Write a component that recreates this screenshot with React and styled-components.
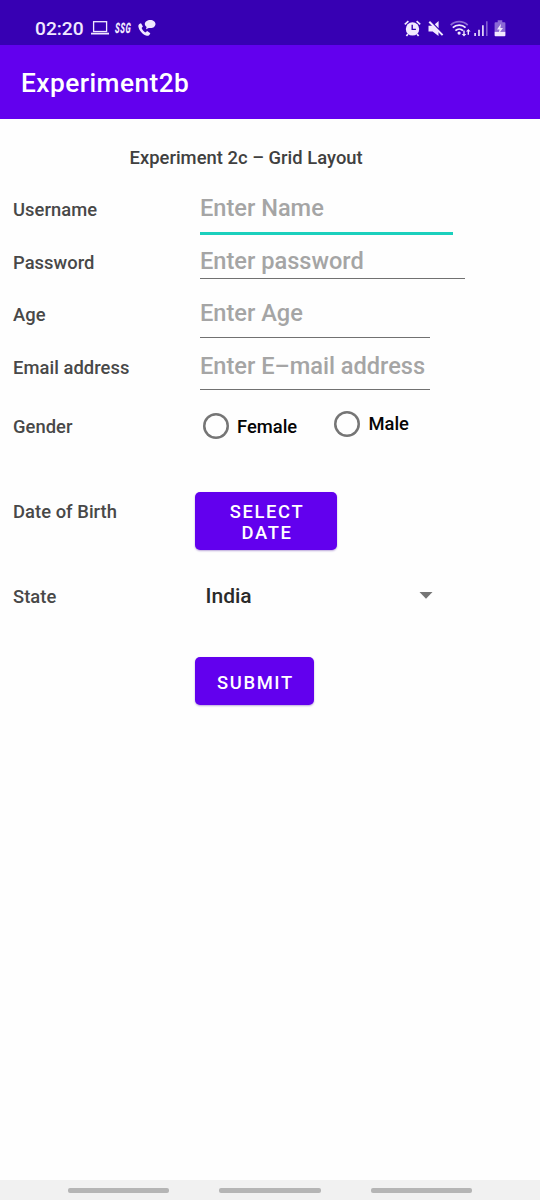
import React from 'react';
import styled, { createGlobalStyle } from 'styled-components';

const GlobalStyle = createGlobalStyle`
  * { box-sizing: border-box; }
  body {
    margin: 0;
    background: #fefefe;
    font-family: Roboto, "Liberation Sans", sans-serif;
    font-weight: 500;
  }
`;

const Screen = styled.div`
  width: 540px;
  height: 1200px;
  display: flex;
  flex-direction: column;
  overflow: hidden;
`;

const StatusBar = styled.header`
  height: 45px;
  flex: none;
  display: flex;
  justify-content: space-between;
  padding: 10px 34px 0 35px;
  background: #3700b3;
  color: #f1e9ff;
`;

const StatusGroup = styled.div`
  display: flex;
  align-items: center;
  height: 36px;
`;

const Clock = styled.span`
  width: 56px;
  padding-top: 1px;
  font-size: 19.2px;
  line-height: 36px;
  white-space: nowrap;
`;

const Carrier = styled.span`
  width: 17px;
  margin: 0 6px 0 6px;
  padding-top: 1px;
  font-size: 14.5px;
  font-weight: 900;
  font-style: italic;
  letter-spacing: 1px;
  line-height: 36px;
  white-space: nowrap;
  transform: scaleX(0.54) skewX(-6deg);
  transform-origin: left center;
`;

const Icon = styled.svg`
  display: block;
  flex: none;
  margin-left: ${(p) => p.$gap || 0}px;
`;

const AppBar = styled.div`
  height: 74px;
  flex: none;
  padding-left: 21px;
  background: #6200ee;
  color: #fff;
  font-size: 26.25px;
  letter-spacing: 0.46px;
  line-height: 77px;
`;

const Form = styled.main`
  flex: 1;
  display: flex;
  flex-direction: column;
`;

const Heading = styled.h1`
  height: 64px;
  margin: 0;
  padding-left: 129.5px;
  font-size: 18.375px;
  font-weight: 500;
  letter-spacing: 0.03px;
  line-height: 77px;
  color: #404040;
`;

const Row = styled.div`
  height: ${(p) => p.$height}px;
  display: flex;
  align-items: flex-start;
`;

const Label = styled.label`
  width: ${(p) => p.$width || 200}px;
  flex: none;
  padding-left: 13px;
  font-size: 18.375px;
  letter-spacing: 0.05px;
  line-height: ${(p) => p.$line || 53}px;
  color: #484848;
`;

const Field = styled.input`
  width: ${(p) => p.$width}px;
  height: ${(p) => p.$height}px;
  padding: ${(p) => p.$offset || 0}px 0 0;
  border: 0;
  border-bottom: ${(p) => (p.$active ? '3px solid #1bd0bd' : '1px solid #717171')};
  border-radius: 0;
  outline: none;
  background: transparent;
  font: 500 23.6px Roboto, "Liberation Sans", sans-serif;
  color: #202020;
  &::placeholder { color: #a5a5a5; opacity: 1; }
`;

const Radio = styled.label`
  display: flex;
  align-items: center;
  height: 30px;
  margin-top: ${(p) => p.$top}px;
  margin-left: ${(p) => p.$left}px;
  font-size: 18.375px;
  color: #050505;
`;

const RadioRing = styled.span`
  width: 26px;
  height: 26px;
  margin-right: 8px;
  border-radius: 50%;
  box-shadow: inset 0 0 0 2.5px #757575;
`;

const Button = styled.button`
  width: ${(p) => p.$width}px;
  height: ${(p) => p.$height}px;
  margin-top: ${(p) => p.$top}px;
  padding: 2px 20px 0 22px;
  border: 0;
  border-radius: 5px;
  background: #6200ee;
  box-shadow: 0 1px 2px rgba(60, 0, 150, 0.35);
  color: #fff;
  font: 500 18.375px/21.5px Roboto, "Liberation Sans", sans-serif;
  letter-spacing: 1.64px;
  text-transform: uppercase;
`;

const Spinner = styled.div`
  width: 227.5px;
  height: 40px;
  display: flex;
  align-items: center;
  justify-content: space-between;
  margin-top: 13px;
  font-size: 21px;
  color: #2a2a2a;
`;

const NavBar = styled.nav`
  height: 20px;
  flex: none;
  display: flex;
  gap: 50px;
  padding: 8px 0 0 68px;
  background: #f1f1f1;
`;

const NavPill = styled.span`
  width: 101.3px;
  height: 4.5px;
  border-radius: 2px;
  background: #b5b5b5;
`;

function LaptopIcon() {
  return (
    <Icon width="18" height="16" viewBox="0 0 18 16">
      <rect x="2.6" y="1.7" width="13" height="9.8" fill="none" stroke="currentColor" strokeWidth="1.3" />
      <path d="M0 12.7h18v1.8H0z" fill="currentColor" />
    </Icon>
  );
}

function CallChatIcon() {
  return (
    <Icon width="18" height="18" viewBox="0 0 18 18">
      <path d="M3 4.2C1.1 4.7.1 5.9.4 7.7c.9 4.1 4.2 7.8 8.4 9 1.7.4 3-.7 3.5-2.5L9.2 12l-1.9 1.5C5.6 12.5 4.3 11 3.6 9.1L4.9 7.4z" fill="currentColor" />
      <path d="M12.3 1C15.3 1 17.5 2.7 17.5 5s-2.2 4.100-4.900 4.100c-.7 0-1.200-.1-1.800-.2L8 10.300l.6-2.400C7.400 7.200 6.800 6.100 6.800 5c0-2.300 2.500-4 5.500-4z" fill="currentColor" />
    </Icon>
  );
}

function AlarmIcon() {
  return (
    <Icon width="17" height="17" viewBox="0 0 17 17">
      <path d="M.8 4.3 4.4 1.2M12.6 1.2l3.6 3.1M4 14l-1.6 2M13 14l1.6 2" stroke="currentColor" strokeWidth="1.7" fill="none" />
      <circle cx="8.5" cy="8.9" r="6.7" fill="currentColor" />
      <path d="M8.2 4.8v4.6h3.7" fill="none" stroke="#3700b3" strokeWidth="1.4" />
    </Icon>
  );
}

function MuteIcon() {
  return (
    <Icon $gap="6.5" width="16" height="17" viewBox="0 0 16 17">
      <path d="M.5 5.700h4.200l5.800 5.600v4.800L4.700 11.600H.5zM6.800 4.300 10.600 1v7.300z" fill="currentColor" />
      <path d="m1.300 1.800 13.300 13.300" stroke="currentColor" strokeWidth="2" />
    </Icon>
  );
}

function WifiIcon() {
  return (
    <Icon $gap="6" width="21" height="17" viewBox="0 0 21 17">
      <g fill="none" stroke="currentColor">
        <path d="M.7 5.200C5.400.500 13 .5 17.700 5.200" strokeWidth="1.7" opacity=".45" />
        <path d="M2.800 7.700c3.600-3.500 9.200-3.500 12.800 0M5.400 10.700c2.200-2.100 5.400-2.100 7.600 0" strokeWidth="1.8" />
      </g>
      <circle cx="9.1" cy="13.1" r="1.6" fill="currentColor" />
      <path d="M13.300 10.500h1.400v3.400h1.600L14 16.500l-2.300-2.600h1.600zM17.600 14.800V11.500H16l2.300-2.600 2.300 2.600H19v3.300z" fill="currentColor" />
    </Icon>
  );
}

function SignalIcon() {
  return (
    <Icon $gap="3" width="14" height="17" viewBox="0 0 14 17">
      <path d="M.3 13h1.600v3H.3zM4.200 9.800h1.600V16H4.200zM8.100 5.200h1.600V16H8.100z" fill="currentColor" />
      <path d="M12 1.200h1.600V16H12z" fill="currentColor" opacity=".4" />
    </Icon>
  );
}

function BatteryIcon() {
  return (
    <Icon $gap="6.5" width="12" height="17" viewBox="0 0 12 17">
      <path d="M3.700.300h4.600v2h2.200q.9 0 .9.900v8.600H.6V3.200q0-.9.9-.9h2.200z" fill="currentColor" opacity=".45" />
      <path d="M.6 11.800h10.800v3.500q0 .9-.9.900h-9q-.9 0-.9-.9z" fill="currentColor" />
      <path d="M7 3.800 3 9.500h2.500L4.600 14 9 8H6.400z" fill="currentColor" />
    </Icon>
  );
}

export default function App() {
  return (
    <>
      <GlobalStyle />
      <Screen>
        <StatusBar>
          <StatusGroup>
            <Clock>02:20</Clock>
            <LaptopIcon />
            <Carrier>SSG</Carrier>
            <CallChatIcon />
          </StatusGroup>
          <StatusGroup>
            <AlarmIcon />
            <MuteIcon />
            <WifiIcon />
            <SignalIcon />
            <BatteryIcon />
          </StatusGroup>
        </StatusBar>
        <AppBar>Experiment2b</AppBar>
        <Form>
          <Heading>Experiment 2c – Grid Layout</Heading>
          <Row $height={53}>
            <Label>Username</Label>
            <Field placeholder="Enter Name" $width={252.5} $height={52} $active />
          </Row>
          <Row $height={52}>
            <Label $line={53}>Password</Label>
            <Field placeholder="Enter password" $width={265} $height={43} $offset={7} />
          </Row>
          <Row $height={53}>
            <Label>Age</Label>
            <Field placeholder="Enter Age" $width={230} $height={50} />
          </Row>
          <Row $height={52}>
            <Label $line={53}>Email address</Label>
            <Field placeholder="Enter E–mail address" $width={230} $height={49} $offset={1} />
          </Row>
          <Row $height={66}>
            <Label $line={67}>Gender</Label>
            <Radio $top={18} $left={3}><RadioRing />Female</Radio>
            <Radio $top={15.5} $left={37.3}><RadioRing />Male</Radio>
          </Row>
          <Row $height={104}>
            <Label $width={195} $line={105}>Date of Birth</Label>
            <Button $width={142} $height={58} $top={33.3}>Select Date</Button>
          </Row>
          <Row $height={66}>
            <Label $width={205.5} $line={67}>State</Label>
            <Spinner>
              India
              <Icon width="14" height="8" viewBox="0 0 14 8"><path d="M.5 0h13L7 6.8z" fill="#757575" /></Icon>
            </Spinner>
          </Row>
          <Row $height={80}>
            <Label $width={195} />
            <Button $width={118.5} $height={48} $top={28.3}>Submit</Button>
          </Row>
        </Form>
        <NavBar>
          <NavPill />
          <NavPill />
          <NavPill />
        </NavBar>
      </Screen>
    </>
  );
}
